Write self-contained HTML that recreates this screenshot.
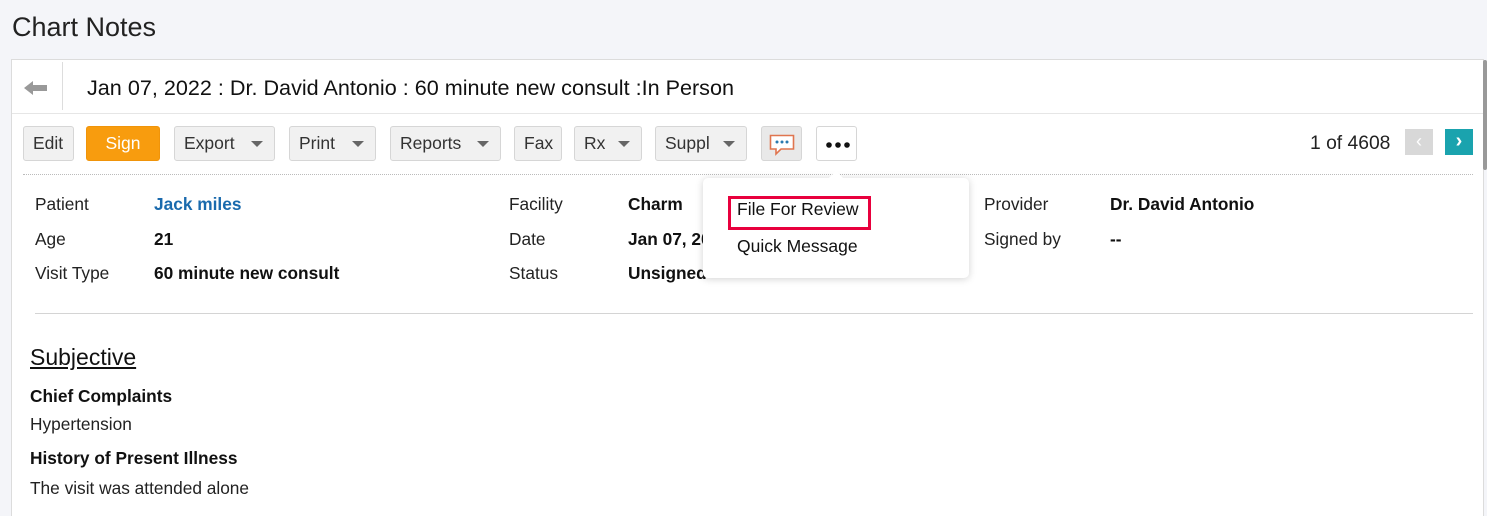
<!DOCTYPE html>
<html><head><meta charset="utf-8"><style>
*{margin:0;padding:0;box-sizing:border-box}
html,body{width:1487px;height:516px;overflow:hidden}
body{background:#f4f5f9;font-family:"Liberation Sans",sans-serif;color:#111;position:relative}
.a{position:absolute;white-space:nowrap}
.card{position:absolute;left:11px;top:59px;width:1473px;height:460px;background:#fff;border:1px solid #dcdcdc}
.btn{position:absolute;top:126px;height:35px;background:#f1f1f1;border:1px solid #d6d6d6;border-radius:3px;font-size:17.5px;color:#333;line-height:33px;padding-left:9px}
.car{position:absolute;top:14px;width:0;height:0;border-left:6px solid transparent;border-right:6px solid transparent;border-top:6px solid #666}
.lb{font-size:17.3px;color:#222}
.vb{font-size:17.3px;font-weight:bold;color:#111}
</style></head><body>
<div class="a" style="left:12px;top:12px;font-size:27px;color:#222">Chart Notes</div>
<div class="card"></div>
<div class="a" style="left:1483px;top:60px;width:4px;height:110px;background:#999;border-radius:2px"></div>
<svg class="a" style="left:24px;top:81px" width="24" height="14"><path d="M0 7 L9 0 V4 H23 V10 H9 V14 Z" fill="#999"/></svg>
<div class="a" style="left:62px;top:62px;width:1px;height:48px;background:#ddd"></div>
<div class="a" style="left:87px;top:75px;font-size:21.6px;color:#111">Jan 07, 2022 : Dr. David Antonio : 60 minute new consult :In Person</div>
<div class="a" style="left:12px;top:113px;width:1471px;height:1px;background:#e6e6e6"></div>

<div class="btn" style="left:23px;width:51px">Edit</div>
<div class="btn" style="left:86px;width:74px;background:#f89c0e;border-color:#f0940a;color:#fff;text-align:center;padding:0">Sign</div>
<div class="btn" style="left:174px;width:101px">Export<span class="car" style="left:76px"></span></div>
<div class="btn" style="left:289px;width:87px">Print<span class="car" style="left:62px"></span></div>
<div class="btn" style="left:390px;width:111px">Reports<span class="car" style="left:86px"></span></div>
<div class="btn" style="left:514px;width:48px">Fax</div>
<div class="btn" style="left:574px;width:68px">Rx<span class="car" style="left:43px"></span></div>
<div class="btn" style="left:655px;width:92px">Suppl<span class="car" style="left:67px"></span></div>
<div class="btn" style="left:761px;width:41px;background:#e9e9e9;padding:0">
<svg style="position:absolute;left:7px;top:7px" width="26" height="22"><path d="M1.5 1.5 H24.5 V15 H12 L7 20 V15 H1.5 Z" fill="#fff" stroke="#e0754f" stroke-width="1.6"/><circle cx="8" cy="8" r="1.5" fill="#2a7ab0"/><circle cx="13" cy="8" r="1.5" fill="#2a7ab0"/><circle cx="18" cy="8" r="1.5" fill="#2a7ab0"/></svg></div>
<div class="btn" style="left:816px;width:41px;background:#fff;padding:0">
<svg style="position:absolute;left:9px;top:14px" width="24" height="8"><circle cx="3" cy="4" r="2.8" fill="#111"/><circle cx="12" cy="4" r="2.8" fill="#111"/><circle cx="21" cy="4" r="2.8" fill="#111"/></svg></div>

<div class="a" style="left:1310px;top:133px;font-size:19.3px;color:#222">1 of 4608</div>
<div class="a" style="left:1405px;top:129px;width:28px;height:26px;background:#d8d8d8;color:#fff;font-size:18px;text-align:center;line-height:25px">&#8249;</div>
<div class="a" style="left:1445px;top:129px;width:28px;height:26px;background:#1aa3ae;color:#fff;font-size:20px;text-align:center;line-height:24px;font-weight:bold">&#8250;</div>
<div class="a" style="left:23px;top:174px;width:1450px;border-top:1px dotted #bbb"></div>

<div class="a lb" style="left:35px;top:194px">Patient</div>
<div class="a vb" style="left:154px;top:194px;color:#1a6aad">Jack miles</div>
<div class="a lb" style="left:35px;top:229px">Age</div>
<div class="a vb" style="left:154px;top:229px">21</div>
<div class="a lb" style="left:35px;top:263px">Visit Type</div>
<div class="a vb" style="left:154px;top:263px">60 minute new consult</div>
<div class="a lb" style="left:509px;top:194px">Facility</div>
<div class="a vb" style="left:628px;top:194px">Charm</div>
<div class="a lb" style="left:509px;top:229px">Date</div>
<div class="a vb" style="left:628px;top:229px">Jan 07, 20</div>
<div class="a lb" style="left:509px;top:263px">Status</div>
<div class="a vb" style="left:628px;top:263px">Unsigned</div>
<div class="a lb" style="left:984px;top:194px">Provider</div>
<div class="a vb" style="left:1110px;top:194px">Dr. David Antonio</div>
<div class="a lb" style="left:984px;top:229px">Signed by</div>
<div class="a vb" style="left:1110px;top:229px">--</div>

<div class="a" style="left:703px;top:178px;width:266px;height:100px;background:#fff;border-radius:5px;box-shadow:0 1px 8px rgba(0,0,0,.18)"></div>
<div class="a" style="left:831px;top:173px;width:10px;height:10px;background:#fff;transform:rotate(45deg)"></div>
<div class="a" style="left:728px;top:196px;width:143px;height:34px;border:3px solid #e8003d"></div>
<div class="a" style="left:737px;top:199px;font-size:17.5px;color:#111">File For Review</div>
<div class="a" style="left:737px;top:236px;font-size:17.5px;color:#111">Quick Message</div>

<div class="a" style="left:35px;top:313px;width:1438px;height:1px;background:#d4d4d4"></div>
<div class="a" style="left:30px;top:344px;font-size:23px;text-decoration:underline;color:#111">Subjective</div>
<div class="a vb" style="left:30px;top:386px">Chief Complaints</div>
<div class="a lb" style="left:30px;top:414px">Hypertension</div>
<div class="a vb" style="left:30px;top:448px">History of Present Illness</div>
<div class="a lb" style="left:30px;top:478px">The visit was attended alone</div>
</body></html>
